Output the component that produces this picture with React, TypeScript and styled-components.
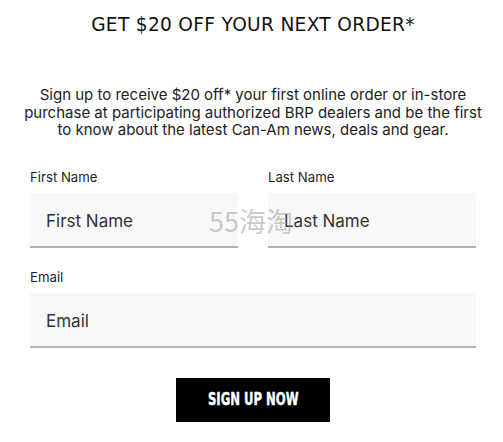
import React from "react";
import styled, { createGlobalStyle } from "styled-components";

const Global = createGlobalStyle`
  html, body { margin: 0; padding: 0; background: #fff; }
  body { font-family: "Liberation Sans", Arial, sans-serif; color: #222; }
  * { box-sizing: border-box; }
`;

const Page = styled.div`
  position: relative;
  width: 503px;
  height: 442px;
  padding: 14px 27px 0 30px;
  display: flex;
  flex-direction: column;
`;

const Title = styled.h2`
  margin: 0;
  text-align: center;
  font-family: "DejaVu Sans", sans-serif;
  font-weight: 400;
  font-size: 18.6px;
  line-height: 22px;
  color: #111;
  letter-spacing: 0.3px;
`;

const Intro = styled.p`
  margin: 50px -6px 0;
  text-align: center;
  font-family: "Inter", "Liberation Sans", sans-serif;
  font-size: 15px;
  line-height: 17.5px;
  color: #222;
`;

const Form = styled.form`
  margin-top: 30px;
  display: flex;
  flex-direction: column;
  gap: 21px;
`;

const Row = styled.div`
  display: flex;
  gap: 30px;
`;

const Field = styled.label`
  flex: 1;
  display: flex;
  flex-direction: column;
  gap: 8px;
`;

const Label = styled.span`
  font-family: "Inter", "Liberation Sans", sans-serif;
  font-size: 13.2px;
  line-height: 16px;
  color: #222;
`;

const Input = styled.input`
  height: 55px;
  width: 100%;
  border: none;
  border-bottom: 2px solid #b3b3b3;
  background: #f8f8f8;
  padding: 3px 16px 0;
  font-family: "Inter", "Liberation Sans", sans-serif;
  font-size: 17px;
  color: #333;
  outline: none;
  &::placeholder { color: #333; opacity: 1; }
`;

const ButtonRow = styled.div`
  display: flex;
  justify-content: center;
  margin-top: 9px;
`;

const Button = styled.button`
  width: 154px;
  height: 44px;
  background: #000;
  color: #fff;
  border: none;
  padding: 0;
  display: flex;
  align-items: center;
  justify-content: center;
  cursor: pointer;
`;

const ButtonText = styled.span`
  display: inline-block;
  font-family: "DejaVu Sans Condensed", "Liberation Sans Narrow", sans-serif;
  font-weight: 700;
  font-size: 17.5px;
  line-height: 1;
  text-transform: uppercase;
  white-space: nowrap;
  transform: scaleX(0.74);
  -webkit-text-stroke: 0.4px #fff;
`;

const Watermark = styled.div`
  position: absolute;
  left: 209px;
  top: 204px;
  font-family: "Noto Sans CJK SC", sans-serif;
  font-size: 27px;
  line-height: 34px;
  color: rgba(150, 150, 150, 0.5);
  pointer-events: none;
`;

export default function App() {
  return (
    <>
      <Global />
      <Page>
        <Title>GET $20 OFF YOUR NEXT ORDER*</Title>
        <Intro>
          Sign up to receive $20 off* your first online order or in-store
          purchase at participating authorized BRP dealers and be the first
          to know about the latest Can-Am news, deals and gear.
        </Intro>
        <Form onSubmit={(e) => e.preventDefault()}>
          <Row>
            <Field>
              <Label>First Name</Label>
              <Input placeholder="First Name" />
            </Field>
            <Field>
              <Label>Last Name</Label>
              <Input placeholder="Last Name" />
            </Field>
          </Row>
          <Field>
            <Label>Email</Label>
            <Input placeholder="Email" />
          </Field>
          <ButtonRow>
            <Button type="submit">
              <ButtonText>Sign up now</ButtonText>
            </Button>
          </ButtonRow>
        </Form>
        <Watermark>55海淘</Watermark>
      </Page>
    </>
  );
}
